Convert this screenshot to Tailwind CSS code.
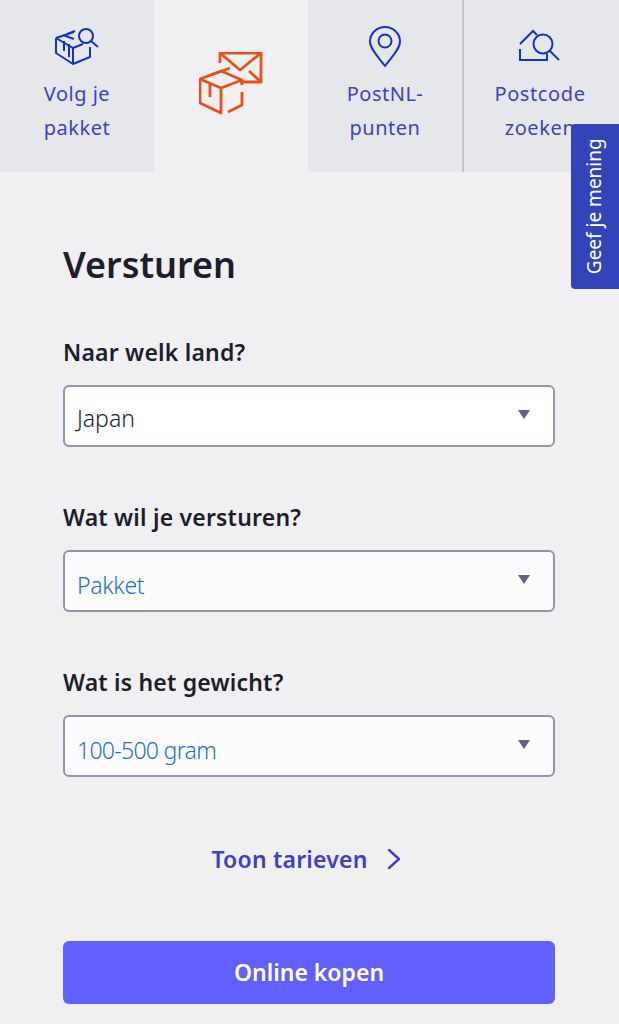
<!doctype html>
<html>
  <head>
    <meta charset="UTF-8" />
    <meta name="viewport" content="width=device-width, initial-scale=1.0" />
    <script src="https://cdn.jsdelivr.net/npm/@tailwindcss/browser@4"></script>
  </head>
  <body class="bg-[#f0f0f3] font-['Noto_Sans',sans-serif]">
    <div class="relative w-[619px] h-[1024px] overflow-hidden">

      <!-- tabs -->
      <nav class="flex h-[172px]">
        <a class="w-[154px] bg-[#e6e7eb] flex flex-col items-center pt-[27px] text-[#3d3fcb]">
          <svg class="w-[44px] h-[40px]" viewBox="0 0 44 40" fill="none" stroke="#1133cc" stroke-width="2" stroke-linejoin="round">
            <path d="M1 11v15l17 11 17-7V20"/>
            <path d="M1 11l17 10 10-4M18 21v16"/>
            <path d="M1 11L19 5M8 8l11 4M9 14v10M14 17v13M12 7l8-3"/>
            <circle cx="31" cy="9" r="7"/>
            <path d="M36 14l7 6"/>
          </svg>
          <span class="mt-[10px] text-[20px] leading-[34px] tracking-[0.5px] text-center">Volg je<br />pakket</span>
        </a>
        <a class="w-[154px] flex justify-center pt-[52px]">
          <svg class="w-[64px] h-[63px]" viewBox="0 0 64 63" fill="none" stroke="#e8501a" stroke-width="2.800" stroke-linejoin="round">
            <path d="M21 11V1h41v29H41"/>
            <path d="M21 1l20 17L62 1M62 30L50 19"/>
            <path d="M1 27v24l21 10V36L1 27l21-8 21 9v5M22 36l21-8"/>
            <path d="M12 23l19-7M11 31v14"/>
            <path d="M43 40v13l-14 7"/>
          </svg>
        </a>
        <a class="w-[154px] bg-[#e6e7eb] flex flex-col items-center pt-[26px] text-[#3d3fcb]">
          <svg class="w-[32px] h-[41px]" viewBox="0 0 32 41" fill="none" stroke="#1133cc" stroke-width="2">
            <path d="M16 40C10 32 1 23 1 15.500a15 14.500 0 0 1 30 0C31 23 22 32 16 40z"/>
            <circle cx="16" cy="15" r="6.500"/>
          </svg>
          <span class="mt-[10px] text-[20px] leading-[34px] tracking-[0.5px] text-center">PostNL-<br />punten</span>
        </a>
        <a class="flex-1 border-l-2 border-[#c4c5cb] bg-[#e6e7eb] flex flex-col items-center pt-[29px] pr-[3px] text-[#3d3fcb]">
          <svg class="w-[42px] h-[32px]" viewBox="0 0 42 32" fill="none" stroke="#1133cc" stroke-width="2">
            <path d="M1 15L14 2l4 4M1 20v11h27v-6"/>
            <circle cx="24" cy="15" r="9.500"/>
            <path d="M31 22l9 9"/>
          </svg>
          <span class="mt-[16px] text-[20px] leading-[34px] tracking-[0.6px] text-center">Postcode<br />zoeken</span>
        </a>
      </nav>

      <!-- form -->
      <main class="ml-[63px] pt-[70px] w-[492px]">
        <h1 class="text-[36px] leading-[46px] font-semibold text-[#1d1d2b]">Versturen</h1>

        <label class="block mt-[48px] text-[23px] leading-[32px] font-semibold tracking-[0.2px] text-[#1d1d2b]">Naar welk land?</label>
        <div class="mt-[17px] h-[62px] rounded-md border-2 border-[#9094ad] bg-white flex items-center justify-between pl-[12px] pr-[23px]">
          <span class="pt-[4px] text-[23px] font-light text-[#1d1d2b]">Japan</span>
          <span class="mb-[4px] w-0 h-0 border-x-[6px] border-x-transparent border-t-[9px] border-t-[#5f6680]"></span>
        </div>

        <label class="block mt-[54px] text-[23px] leading-[32px] font-semibold tracking-[0.2px] text-[#1d1d2b]">Wat wil je versturen?</label>
        <div class="mt-[17px] h-[62px] rounded-md border-2 border-[#9094ad] bg-[#fcfcff] flex items-center justify-between pl-[12px] pr-[23px]">
          <span class="pt-[8px] text-[23px] font-light tracking-[-0.3px] text-[#1a6fdc]">Pakket</span>
          <span class="mb-[4px] w-0 h-0 border-x-[6px] border-x-transparent border-t-[9px] border-t-[#5f6680]"></span>
        </div>

        <label class="block mt-[54px] text-[23px] leading-[32px] font-semibold tracking-[0.2px] text-[#1d1d2b]">Wat is het gewicht?</label>
        <div class="mt-[17px] h-[62px] rounded-md border-2 border-[#9094ad] bg-[#fcfcff] flex items-center justify-between pl-[12px] pr-[23px]">
          <span class="pt-[8px] text-[23px] font-light tracking-[-0.7px] text-[#1a6fdc]">100-500 gram</span>
          <span class="mb-[4px] w-0 h-0 border-x-[6px] border-x-transparent border-t-[9px] border-t-[#5f6680]"></span>
        </div>

        <a class="mt-[64px] flex items-center justify-center gap-[19px] pr-[6px] h-[36px] text-[23px] font-semibold tracking-[0.2px] text-[#3f3ec9]">
          Toon tarieven
          <svg class="w-[14px] h-[22px]" viewBox="0 0 14 22" fill="none" stroke="#3f3ec9" stroke-width="2.400" stroke-linecap="round" stroke-linejoin="round"><path d="M2 2l10 9-10 9"/></svg>
        </a>

        <button class="mt-[64px] w-full h-[63px] rounded-md bg-[#615ffe] text-white text-[23px] font-semibold">Online kopen</button>
      </main>

      <!-- feedback tab, sits over the content -->
      <div class="absolute left-[571px] top-[124px] w-[48px] h-[165px] rounded-l-[4px] bg-[#3343b8] flex items-center justify-center">
        <span class="-rotate-90 whitespace-nowrap text-[19px] -translate-x-[1px] text-white">Geef je mening</span>
      </div>
    </div>
  </body>
</html>
